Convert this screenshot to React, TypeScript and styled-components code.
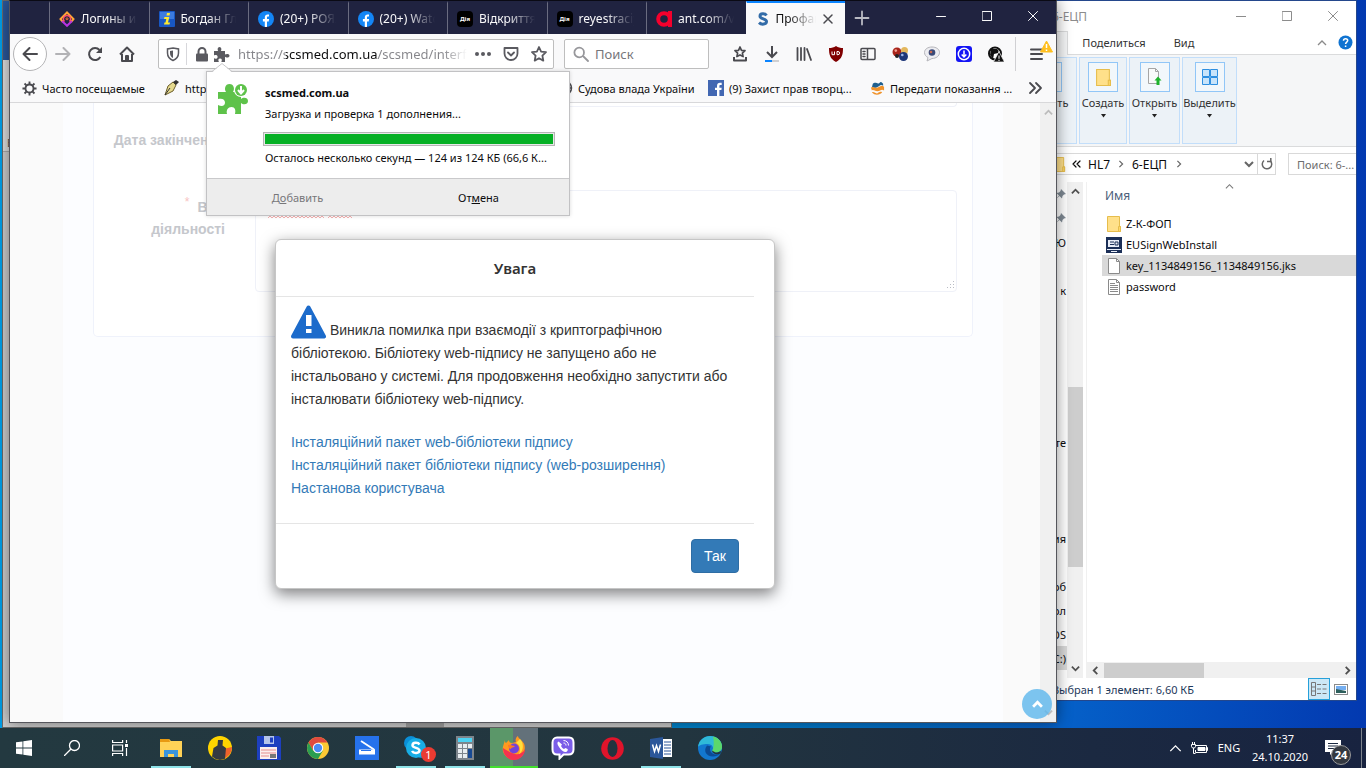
import React from 'react';
import styled, { createGlobalStyle, css } from 'styled-components';

const ui = `'Noto Sans', 'Open Sans', sans-serif`;
const web = `'Liberation Sans', Arial, sans-serif`;

const Global = createGlobalStyle`
  * { box-sizing: border-box; }
  body { margin: 0; overflow: hidden; font-family: ${ui}; font-size: 11px; color: #0c0c0d; }
  button { font: inherit; color: inherit; background: none; border: 0; padding: 0; }
  input, textarea { font: inherit; border: 0; padding: 0; outline: 0; background: none; }
  svg { display: block; flex: none; }
`;

/* ---------- desktop ---------- */
const Desktop = styled.div`
  display: flex;
  flex-direction: column;
  height: 100vh;
  background: linear-gradient(90deg, #009fe9 0, #0083cc 50%, #0560c8 78%, #0339b0 100%);
`;
const Workspace = styled.main`
  position: relative;
  flex: 1;
  min-height: 0;
  overflow: hidden;
`;

/* ---------- word window in the back ---------- */
const WordWindow = styled.section`
  position: absolute;
  left: 2px;
  top: 0;
  bottom: 0;
  width: 670px;
  display: flex;
  flex-direction: column;
  background: #cdcdcd;
  border: 1px solid #6b6b6b;
`;
const WordTitle = styled.div`
  height: 59px;
  background: #2b579a;
`;
const WordRibbon = styled.div`
  height: 92px;
  padding: 76px 0 0 4px;
  line-height: 14px;
  color: #555;
  background: #dedede;
  border-bottom: 1px solid #aaa;
`;
const WordScroll = styled.div`
  height: 5px;
  margin-top: auto;
  padding-left: 403px;
`;
const WordThumb = styled.div`
  width: 38px;
  height: 5px;
  background: #a0a0a0;
`;

/* ---------- browser window ---------- */
const Browser = styled.section`
  position: absolute;
  left: 9px;
  top: 0;
  right: 309px;
  bottom: 5px;
  display: flex;
  flex-direction: column;
  border: 1px solid #55565c;
  border-top-color: #0a0a14;
  background: #f9f9fa;
  box-shadow: 0 0 14px rgba(0, 0, 0, 0.45);
`;
const TabBar = styled.div`
  display: flex;
  height: 33px;
  flex: none;
  background: #202340;
  color: #f9f9fa;
`;
const TabStub = styled.div`
  width: 39px;
  flex: none;
`;
const Tabs = styled.div`
  display: grid;
  grid-template-columns: repeat(8, minmax(0, 1fr));
  flex: 0 1 796px;
  min-width: 0;
`;
const Tab = styled.button<{ $active?: boolean }>`
  display: flex;
  align-items: center;
  min-width: 0;
  gap: 6px;
  padding: 0 12px 0 9px;
  text-align: left;
  border-left: 1px solid #6a6c80;
  border-top: 2px solid transparent;
  ${(p) =>
    p.$active &&
    css`
      padding-right: 11px;
      color: #0c0c0d;
      background: #f9f9fa;
      border-left-color: #f9f9fa;
      border-top-color: #0a84ff;
    `}
`;
const TabLabel = styled.span`
  flex: 1;
  overflow: hidden;
  white-space: nowrap;
  font-size: 12px;
  line-height: 18px;
  mask-image: linear-gradient(90deg, #000 calc(100% - 28px), transparent);
`;
const DiaIcon = styled.span`
  display: flex;
  align-items: center;
  justify-content: center;
  flex: none;
  width: 16px;
  height: 16px;
  border-radius: 4px;
  background: #000;
  color: #fff;
  font: 700 6px ${ui};
`;
const NewTab = styled.button`
  width: 34px;
  display: grid;
  place-items: center;
`;
const WindowControls = styled.div`
  display: flex;
  margin-left: auto;
`;
const WindowButton = styled.button`
  width: 46px;
  height: 30px;
  display: grid;
  place-items: center;
`;
const NavBar = styled.div`
  display: flex;
  align-items: center;
  flex: none;
  height: 40px;
  padding: 0 3px;
  color: #4a4a4f;
`;
const ToolButton = styled.button<{ $faded?: boolean }>`
  position: relative;
  flex: none;
  width: 32px;
  height: 32px;
  display: grid;
  place-items: center;
  opacity: ${(p) => (p.$faded ? 0.4 : 1)};
`;
const BackButton = styled(ToolButton)`
  width: 34px;
  height: 34px;
  border: 1px solid #b4b4b6;
  border-radius: 50%;
  background: #fff;
`;
const UrlBar = styled.div`
  display: flex;
  align-items: center;
  flex: 1;
  min-width: 0;
  height: 30px;
  margin: 0 10px 0 15px;
  padding: 0 0 0 6px;
  background: #fff;
  border: 1px solid #bebebe;
  border-radius: 2px;
`;
const BarButton = styled.button<{ $w: number }>`
  width: ${(p) => p.$w}px;
  height: 28px;
  flex: none;
  display: grid;
  place-items: center;
`;
const BarDivider = styled.span`
  width: 1px;
  height: 22px;
  background: #d7d7db;
  margin: 0 5px;
`;
const UrlInput = styled.input`
  flex: 1;
  min-width: 0;
  margin-left: 6px;
  height: 24px;
  font-size: 13px;
  color: #737378;
  background: linear-gradient(90deg, #85858a 48px, #0c0c0d 48px, #0c0c0d 140px, #85858a 140px, #85858a calc(100% - 26px), transparent calc(100% - 2px));
  background-clip: text;
  -webkit-background-clip: text;
  -webkit-text-fill-color: transparent;
`;
const SearchBox = styled.label`
  display: flex;
  align-items: center;
  gap: 6px;
  width: 145px;
  height: 30px;
  flex: none;
  margin-right: 15px;
  padding: 0 8px;
  background: #fff;
  border: 1px solid #bebebe;
  border-radius: 2px;
  input { width: 100%; min-width: 0; font-size: 13px; }
  input::placeholder { color: #76767a; opacity: 1; }
`;
const NavDivider = styled.span`
  width: 1px;
  height: 34px;
  margin: 0 5px 0 3px;
  background: #d0d0d3;
`;
const AlertBadge = styled.span`
  position: absolute;
  right: 0;
  top: 2px;
`;
const Bookmarks = styled.div`
  display: flex;
  align-items: center;
  flex: none;
  height: 29px;
  padding: 0 12px;
  border-bottom: 1px solid #d8d8da;
`;
const Bookmark = styled.a<{ $w?: number }>`
  display: flex;
  align-items: center;
  gap: 5px;
  width: ${(p) => (p.$w ? `${p.$w}px` : 'auto')};
  flex: ${(p) => (p.$w ? 'none' : '1')};
  min-width: 0;
  color: inherit;
  text-decoration: none;
  white-space: nowrap;
`;
const More = styled.button`
  margin-left: auto;
`;

/* ---------- install popup ---------- */
const Popup = styled.aside`
  position: absolute;
  z-index: 3;
  left: 196px;
  top: 70px;
  width: 364px;
  background: #fff;
  border: 1px solid #c2c2c4;
  box-shadow: 0 0 4px rgba(0, 0, 0, 0.15);
`;
const PopupArrow = styled.span`
  position: absolute;
  left: 5px;
  top: -9px;
`;
const PopupBody = styled.div`
  display: grid;
  grid-template-columns: 30px 1fr;
  column-gap: 15px;
  height: 106px;
  padding: 10px 14px 0 11px;
  line-height: 21px;
  div { min-width: 0; }
`;
const PopupLine = styled.p`
  margin: 0 0 0 2px;
  overflow: hidden;
  white-space: nowrap;
  text-overflow: ellipsis;
`;
const PopupProgress = styled.progress`
  display: block;
  appearance: none;
  width: 100%;
  height: 14px;
  margin: 8px 0 1px;
  padding: 1px;
  border: 1px solid #b5b5b5;
  background: #e8e8e8;
  &::-webkit-progress-bar { background: #e8e8e8; }
  &::-webkit-progress-value { background: #06b025; }
`;
const PopupFooter = styled.div`
  display: grid;
  grid-template-columns: 1fr 1fr;
  height: 37px;
  background: #ededed;
  border-top: 1px solid #c9c9cb;
  button:disabled { color: #77777a; }
`;

/* ---------- web page ---------- */
const Viewport = styled.div`
  display: flex;
  flex: 1;
  min-height: 0;
`;
const Page = styled.div`
  position: relative;
  flex: 1;
  min-width: 0;
  padding: 0 37px 0 53px;
  overflow: hidden;
  background: #fafafa;
  font-family: ${web};
  font-size: 14px;
`;
const PageSheet = styled.div`
  height: 100%;
  padding: 0 30px;
  background: #fcfdff;
`;
const FormCard = styled.form`
  display: grid;
  grid-template-columns: 131px 1fr;
  grid-template-rows: 87px auto;
  column-gap: 30px;
  align-content: start;
  align-items: start;
  height: 234px;
  padding-right: 15px;
  background: #fff;
  border: 1px solid #eff2fb;
  border-top: 0;
  border-radius: 0 0 5px 5px;
`;
const FormLabel = styled.label<{ $top: number }>`
  padding-top: ${(p) => p.$top}px;
  font-weight: 700;
  line-height: 22px;
  text-align: right;
  white-space: nowrap;
  color: #c5c7cc;
  sup { font-size: 12px; line-height: 12px; margin-right: 8px; color: #f7c3c3; font-weight: 400; }
`;
const DateInput = styled.input`
  height: 4px;
  border: 1px solid #eff1f8;
  border-top: 0;
  border-radius: 0 0 4px 4px;
`;
const ActivityText = styled.textarea`
  height: 102px;
  padding: 8px 12px;
  color: #fff;
  border: 1px solid #eff1f8;
  border-radius: 4px;
  resize: none;
`;
const TextCell = styled.div`
  position: relative;
  display: grid;
  align-content: start;
`;
const Squiggle = styled.svg`
  position: absolute;
  left: 13px;
  top: 25px;
`;
const Grip = styled.svg`
  position: absolute;
  right: 3px;
  bottom: 3px;
`;
const Modal = styled.div`
  position: absolute;
  left: 50%;
  top: 136px;
  width: 500px;
  margin-left: -250px;
  padding-right: 20px;
  background: #fff;
  border: 1px solid #c6c6c6;
  border-radius: 6px;
  box-shadow: 0 5px 15px rgba(0, 0, 0, 0.5);
  color: #333;
`;
const ModalTitle = styled.h4`
  margin: 0;
  height: 57px;
  text-align: center;
  font: 600 15px/56px ${ui};
  border-bottom: 1px solid #e5e5e5;
`;
const ModalBody = styled.div`
  height: 226px;
  padding: 8px 15px 0;
  line-height: 23px;
  p { margin: 0 0 20px; }
  p svg { display: inline-block; vertical-align: -4px; }
  a { display: block; color: #337ab7; text-decoration: none; }
`;
const ModalFooter = styled.div`
  display: flex;
  justify-content: flex-end;
  padding: 15px;
  border-top: 1px solid #e5e5e5;
`;
const OkButton = styled.button`
  width: 48px;
  height: 34px;
  color: #fff;
  background: #337ab7;
  border: 1px solid #2e6da4;
  border-radius: 4px;
`;
const PageScroll = styled.div`
  width: 16px;
  display: flex;
  flex-direction: column;
  justify-content: space-between;
  align-items: center;
  padding: 5px 0;
  background: #f0f0f0;
`;
const ToTop = styled.button`
  position: absolute;
  z-index: 2;
  right: 4px;
  bottom: 3px;
  width: 30px;
  height: 30px;
  display: grid;
  place-items: center;
  border-radius: 50%;
  background: rgba(92, 183, 236, 0.8);
`;

/* ---------- file manager window ---------- */
const Explorer = styled.section`
  position: absolute;
  top: 0;
  right: 9px;
  bottom: 27px;
  width: 358px;
  display: flex;
  flex-direction: column;
  background: #fff;
  border: 1px solid #24478c;
`;
const ExTitle = styled.div`
  display: flex;
  align-items: center;
  height: 30px;
  flex: none;
  color: #8c8c8c;
  font-size: 12px;
`;
const ExTitleText = styled.span`
  width: 87px;
  text-align: right;
`;
const ExMenu = styled.div`
  display: flex;
  align-items: stretch;
  height: 24px;
  flex: none;
  padding-right: 3px;
  line-height: 24px;
  border-bottom: 1px solid #dadbdc;
  color: #333;
  svg { align-self: center; }
`;
const ExMenuTab = styled.button<{ $w: number; $open?: boolean }>`
  width: ${(p) => p.$w}px;
  flex: none;
  ${(p) =>
    p.$open &&
    css`
      height: 24px;
      background: #f5f6f7;
      border: 1px solid #dadbdc;
      border-bottom: 0;
    `}
`;
const HelpRow = styled.div`
  display: flex;
  align-items: center;
  gap: 11px;
  margin-left: auto;
`;
const Ribbon = styled.div`
  display: flex;
  align-items: flex-start;
  gap: 2px;
  height: 92px;
  flex: none;
  padding: 2px 0 0 17px;
  background: #f5f6f7;
  border-bottom: 1px solid #dadbdc;
`;
const RibbonButton = styled.button<{ $w: number }>`
  display: flex;
  flex-direction: column;
  align-items: center;
  flex: none;
  width: ${(p) => p.$w}px;
  height: 87px;
  padding-top: 4px;
  overflow: hidden;
  white-space: nowrap;
  color: #333;
  background: #ecf2f7;
  border: 1px solid #c2defa;
  line-height: 22px;
`;
const RibbonIcon = styled.span`
  display: grid;
  place-items: center;
  flex: none;
  width: 30px;
  height: 30px;
  border: 1px solid #91c6f7;
  background: #f2f7fb;
`;
const AddressRow = styled.div`
  display: flex;
  gap: 12px;
  flex: none;
  height: 35px;
  padding: 6px 0 7px;
`;
const AddressBox = styled.div`
  display: flex;
  align-items: center;
  width: 276px;
  flex: none;
  padding-left: 50px;
  border: 1px solid #d9d9d9;
  font-size: 12px;
  white-space: nowrap;
`;
const Crumb = styled.span<{ $w: number }>`
  width: ${(p) => p.$w}px;
`;
const AddressTail = styled.div`
  display: flex;
  align-items: center;
  align-self: stretch;
  gap: 3px;
  margin-left: auto;
`;
const Refresh = styled.button`
  display: grid;
  place-items: center;
  width: 18px;
  align-self: stretch;
  border-left: 1px solid #d9d9d9;
`;
const ExSearch = styled.input`
  flex: 1;
  min-width: 0;
  padding-left: 8px;
  border: 1px solid #d9d9d9;
  border-right: 0;
  &::placeholder { color: #6d6d6d; opacity: 1; }
`;
const ExMain = styled.div`
  display: flex;
  flex: 1;
  min-height: 0;
`;
const SideTree = styled.div`
  display: flex;
  flex-direction: column;
  justify-content: space-between;
  width: 67px;
  flex: none;
  padding-bottom: 8px;
`;
const TreeItem = styled.div<{ $sel?: boolean }>`
  display: flex;
  align-items: center;
  justify-content: flex-end;
  height: 24px;
  padding-right: 1px;
  overflow: hidden;
  white-space: nowrap;
  background: ${(p) => (p.$sel ? '#d9d9d9' : 'transparent')};
`;
const VScroll = styled.div`
  display: flex;
  flex-direction: column;
  align-items: center;
  justify-content: space-between;
  width: 16px;
  flex: none;
  padding: 5px 0;
  background: #f0f0f0;
`;
const VThumb = styled.div`
  width: 15px;
  height: 180px;
  margin-top: 94px;
  background: #cdcdcd;
`;
const FilePane = styled.div`
  display: flex;
  flex-direction: column;
  flex: 1;
  min-width: 0;
  margin-left: 3px;
  border-left: 1px solid #f0f0f0;
`;
const FileTable = styled.table`
  width: 100%;
  border-collapse: collapse;
  th { position: relative; height: 31px; padding: 0 0 5px 18px; font-size: 12px; font-weight: 400; text-align: left; color: #4c607a; }
  td { height: 21px; padding: 0; }
`;
const SortMark = styled.span`
  position: absolute;
  left: 138px;
  top: 0;
`;
const FileCell = styled.div<{ $sel?: boolean }>`
  display: flex;
  align-items: center;
  gap: 4px;
  height: 21px;
  margin-left: 15px;
  padding-left: 4px;
  white-space: nowrap;
  background: ${(p) => (p.$sel ? '#d9d9d9' : 'transparent')};
`;
const HScroll = styled.div`
  display: flex;
  align-items: center;
  height: 16px;
  margin-top: auto;
  padding: 0 4px;
  background: #f0f0f0;
  svg:last-child { margin-left: auto; }
`;
const HThumb = styled.div`
  width: 100px;
  height: 15px;
  margin-left: 4px;
  background: #cdcdcd;
`;
const ExStatus = styled.div`
  display: flex;
  align-items: center;
  flex: none;
  height: 22px;
  padding-right: 4px;
  color: #1e395b;
`;
const StatusText = styled.span`
  width: 194px;
  text-align: right;
  white-space: nowrap;
`;
const ViewButton = styled.button<{ $on?: boolean }>`
  display: grid;
  place-items: center;
  width: 22px;
  height: 22px;
  border: 1px solid ${(p) => (p.$on ? '#26a0da' : 'transparent')};
  background: ${(p) => (p.$on ? '#cce8f6' : 'transparent')};
`;
const ViewSwitch = styled.div`
  display: flex;
  margin-left: auto;
`;

/* ---------- taskbar ---------- */
const Taskbar = styled.footer`
  display: flex;
  height: 40px;
  flex: none;
  color: #fff;
  background: linear-gradient(90deg, #233940 0, #22353f 50%, #1b2941 80%, #182340 100%);
`;
const SystemButton = styled.button`
  width: 48px;
  display: grid;
  place-items: center;
`;
const Apps = styled.div`
  display: flex;
  gap: 1px;
  margin-left: 3px;
`;
const AppButton = styled.button<{ $state?: 'open' | 'active' }>`
  position: relative;
  width: 48px;
  display: grid;
  place-items: center;
  ${(p) =>
    p.$state === 'open' &&
    css`
      background: linear-gradient(#8ee3e8, #8ee3e8) center bottom / 40px 2px no-repeat;
    `}
  ${(p) =>
    p.$state === 'active' &&
    css`
      background: linear-gradient(90deg, #5b9769 23px, #63717a 23px);
      box-shadow: inset 0 -2px #43e02f;
    `}
`;
const CountBadge = styled.span`
  position: absolute;
  right: 4px;
  bottom: 6px;
  width: 15px;
  height: 15px;
  border-radius: 50%;
  background: #ea3b32;
  line-height: 15px;
  text-align: center;
`;
const Tray = styled.div`
  display: flex;
  align-items: center;
  margin-left: auto;
`;
const TrayItem = styled.button<{ $w: number }>`
  position: relative;
  display: grid;
  place-items: center;
  width: ${(p) => p.$w}px;
  height: 40px;
  line-height: 18px;
`;
const NoteButton = styled(TrayItem)`
  padding-right: 8px;
`;
const NoteBadge = styled.span`
  position: absolute;
  left: 18px;
  top: 17px;
  width: 20px;
  height: 20px;
  border: 1px solid #999;
  border-radius: 50%;
  background: #333840;
  font-weight: 700;
  line-height: 17px;
`;
const PeekBar = styled.span`
  width: 5px;
  height: 40px;
  border-left: 1px solid #7d838c;
`;

/* ---------- drawings ---------- */
const Stroke = ({ d, s = 16, w = 2, c = 'currentColor', vb = 16 }: { d: string; s?: number; w?: number; c?: string; vb?: number }) => (
  <svg width={s} height={s} viewBox={`0 0 ${vb} ${vb}`} fill="none" stroke={c} strokeWidth={w} strokeLinecap="round" strokeLinejoin="round">
    <path d={d} />
  </svg>
);
const Chevron = ({ dir, c = '#505050', s = 10, w = 2 }: { dir: 'up' | 'down' | 'left' | 'right'; c?: string; s?: number; w?: number }) => {
  const d = { up: 'M1 7l4-4 4 4', down: 'M1 3l4 4 4-4', left: 'M7 1L3 5l4 4', right: 'M3 1l4 4-4 4' }[dir];
  return (
    <svg width={s} height={s} viewBox="0 0 10 10" fill="none" stroke={c} strokeWidth={w}>
      <path d={d} />
    </svg>
  );
};
const Facebook = () => (
  <svg width="16" height="16" viewBox="0 0 16 16">
    <circle cx="8" cy="8" r="8" fill="#1486f5" />
    <path d="M6.8 16v-5.6H4.9V8.1h1.9V6.5c0-2 1.1-3 2.900-3 .7 0 1.300.1 1.300.1v1.900h-.9c-.9 0-1.100.5-1.100 1.100v1.500h2.100l-.4 2.300H9V16z" fill="#fff" />
  </svg>
);
const Puzzle = ({ s = 16, c = 'currentColor' }: { s?: number; c?: string }) => (
  <svg width={s} height={s} viewBox="0 0 16 16" fill={c}>
    <path d="M0 5h4.200C3.300 3.900 3.500 1 5.500 1s2.300 2.900 1.400 4H11v3.600c1-.9 4.500-1.200 4.500 1.100s-3.500 2-4.500 1V16H7.300c.9-1.600.7-3.400-1.200-3.400S4 14.400 4.900 16H0v-3.800c1.600.9 3.600.5 3.600-1.300S1.600 8.700 0 9.500z" />
  </svg>
);
const Folder = ({ s = 16 }: { s?: number }) => (
  <svg width={s} height={s} viewBox="0 0 16 16">
    <path d="M1.500.5h12v10h1v5h-13z" fill="#ffe08a" stroke="#e6bd4c" />
    <path d="M12.500 15.500v-5h2v5z" fill="#ffd869" stroke="#e6bd4c" />
  </svg>
);
const Sheet = ({ lines }: { lines?: boolean }) => (
  <svg width="16" height="16" viewBox="0 0 16 16" fill="#fff" stroke="#8a8a8a">
    <path d="M2.500.5h8l3 3v12h-11z" />
    <path d="M10.500.5v3h3" fill="none" />
    {lines && <path d="M4 4.500h5M4 6.500h8M4 8.500h8M4 10.500h8M4 12.500h8" />}
  </svg>
);
const Pin = () => (
  <svg width="10" height="10" viewBox="0 0 10 10" fill="#7f8a94">
    <path d="M5 0l5 5-2 .5L6.500 7 6 9.500 3.500 7 0 10l3-3.500L.5 4 3 3.500 4.500 2z" />
  </svg>
);
const DropMark = () => (
  <svg width="7" height="4" viewBox="0 0 7 4"><path d="M1 0h5L3.500 3.500z" fill="#222" /></svg>
);

const BrowserTabs = () => (
  <TabBar>
    <TabStub />
    <Tabs>
      <Tab>
        <svg width="16" height="16" viewBox="0 0 16 16" fill="none" strokeWidth="2">
          <path d="M4 11L1.500 8 8 1.500 14.500 8 12 11" stroke="#ffa436" />
          <path d="M3 10l5 4.800L13 10" stroke="#b833e1" />
          <path d="M5.500 10.500a3.500 3.500 0 1 1 5 0" stroke="#ff4f6d" strokeWidth="1.500" />
          <circle cx="8" cy="7.800" r="1" stroke="#ff7139" strokeWidth="1" />
        </svg>
        <TabLabel>Логины и пароли</TabLabel>
      </Tab>
      <Tab>
        <svg width="16" height="16" viewBox="0 0 16 16">
          <rect width="16" height="16" rx="1" fill="#1857c4" />
          <rect x="1" y="1" width="14" height="7" fill="#3c7be0" />
          <path d="M8 2h3l-.5 2.500h-3zM5.500 6h4.800L9 11.500h2l-.5 2H5l.5-2h1l.8-3.500H5z" fill="#ffe92e" />
        </svg>
        <TabLabel>Богдан Глоба</TabLabel>
      </Tab>
      <Tab><Facebook /><TabLabel>(20+) РОЯЛЬ</TabLabel></Tab>
      <Tab><Facebook /><TabLabel>(20+) Watch</TabLabel></Tab>
      <Tab><DiaIcon>Дія</DiaIcon><TabLabel>Відкриття ФОП</TabLabel></Tab>
      <Tab><DiaIcon>Дія</DiaIcon><TabLabel>reyestraciya</TabLabel></Tab>
      <Tab>
        <svg width="16" height="16" viewBox="0 0 16 16" fill="none" stroke="#f5002d" strokeWidth="4">
          <path d="M14 0v16" />
          <circle cx="8" cy="8" r="5.800" />
        </svg>
        <TabLabel>ant.com/video</TabLabel>
      </Tab>
      <Tab $active>
        <svg width="14" height="16" viewBox="0 0 14 16" fill="none" stroke="#336ca8" strokeWidth="3">
          <path d="M10.500 4.500C9 2.200 4 2.200 4 5.200s6.500 2.300 6.500 5.300-5 3.500-7.500 1.200" />
        </svg>
        <TabLabel>Профайл</TabLabel>
        <Stroke d="M2 2l8 8M10 2l-8 8" s={12} vb={12} w={1.5} c="#4a4a4f" />
      </Tab>
    </Tabs>
    <NewTab aria-label="Новая вкладка"><Stroke d="M8 1.500v13M1.500 8h13" w={1.800} c="#b9bac3" /></NewTab>
    <WindowControls>
      <WindowButton aria-label="Свернуть"><Stroke d="M0.500 5.500h9" s={10} vb={10} w={1} /></WindowButton>
      <WindowButton aria-label="Развернуть"><Stroke d="M.5.5h9v9h-9z" s={10} vb={10} w={1} /></WindowButton>
      <WindowButton aria-label="Закрыть"><Stroke d="M.5.5l9 9M9.500.5l-9 9" s={10} vb={10} w={1} /></WindowButton>
    </WindowControls>
  </TabBar>
);

const Navigation = () => (
  <NavBar>
    <BackButton aria-label="Назад"><Stroke d="M15 8H1.500M7.500 2l-6 6 6 6" /></BackButton>
    <ToolButton $faded aria-label="Вперёд"><Stroke d="M1 8h13.500M8.500 2l6 6-6 6" /></ToolButton>
    <ToolButton aria-label="Обновить">
      <svg width="16" height="16" viewBox="0 0 16 16" fill="none" stroke="currentColor" strokeWidth="2">
        <path d="M13.300 11A6 6 0 1 1 12.500 4" />
        <path d="M15 1v6H9z" fill="currentColor" stroke="none" />
      </svg>
    </ToolButton>
    <ToolButton aria-label="Домой">
      <svg width="16" height="16" viewBox="0 0 16 16" fill="none" stroke="currentColor" strokeWidth="2" strokeLinejoin="round">
        <path d="M1 8.500L8 1.500l7 7M3 8v7h10V8" />
        <path d="M7 14v-4h2v4" />
      </svg>
    </ToolButton>
    <UrlBar>
      <BarButton $w={16} aria-label="Защита">
        <svg width="16" height="16" viewBox="0 0 16 16" fill="none" stroke="#5a5a60" strokeWidth="1.500">
          <path d="M8 2l5.500 1v4c0 3.500-2 6-5.500 7.500C4.500 13 2.500 10.500 2.500 7V3z" />
          <path d="M8 4.500v7.500C6 11 5 9.500 5 7V5z" fill="#5a5a60" stroke="none" />
        </svg>
      </BarButton>
      <BarDivider />
      <BarButton $w={20} aria-label="Соединение">
        <svg width="14" height="15" viewBox="0 0 14 15">
          <path d="M3.500 7V4.500a3.500 3.500 0 0 1 7 0V7" fill="none" stroke="#5a5a60" strokeWidth="2" />
          <rect x="1" y="6.500" width="12" height="8" rx="1" fill="#5a5a60" />
        </svg>
      </BarButton>
      <BarButton $w={20} aria-label="Дополнение"><Puzzle c="#5a5a60" /></BarButton>
      <UrlInput aria-label="Адрес" defaultValue="https://scsmed.com.ua/scsmed/interface" />
      <BarButton $w={28} aria-label="Действия">
        <svg width="16" height="4" viewBox="0 0 16 4" fill="#5a5a60"><circle cx="2" cy="2" r="2" /><circle cx="8" cy="2" r="2" /><circle cx="14" cy="2" r="2" /></svg>
      </BarButton>
      <BarButton $w={28} aria-label="Pocket"><Stroke d="M1.500 2h13v5.500a6.500 6.500 0 0 1-13 0zM5 6.500l3 3 3-3" c="#5a5a60" w={1.800} /></BarButton>
      <BarButton $w={28} aria-label="Закладка"><Stroke d="M8 1l2.100 4.600 4.900.6-3.600 3.400.9 5L8 12.200l-4.300 2.400.9-5L1 6.200l4.900-.6z" c="#5a5a60" w={1.800} /></BarButton>
    </UrlBar>
    <SearchBox>
      <Stroke d="M11 6.500a4.800 4.800 0 1 1-9.600 0 4.800 4.800 0 0 1 9.600 0M10 10l5 5" c="#97979b" w={1.800} />
      <input placeholder="Поиск" aria-label="Поиск" />
    </SearchBox>
    <ToolButton aria-label="В закладки">
      <svg width="16" height="16" viewBox="0 0 16 16" fill="none" stroke="currentColor" strokeWidth="1.700" strokeLinejoin="round">
        <path d="M8 1l1.500 3.300 3.500.4-2.600 2.400.7 3.500L8 8.900l-3.100 1.700.7-3.500L3 4.700l3.500-.4z" />
        <path d="M2 11v3.500h12V11" strokeWidth="2" />
      </svg>
    </ToolButton>
    <ToolButton aria-label="Загрузки">
      <svg width="16" height="16" viewBox="0 0 16 16" fill="none" stroke="currentColor" strokeWidth="2">
        <path d="M8 0v10M3 6l5 5 5-5" />
        <path d="M1 15h14" stroke="#d0d0d2" /><path d="M1 15h7" stroke="#0a84ff" />
      </svg>
    </ToolButton>
    <ToolButton aria-label="Библиотека"><Stroke d="M1.500 2v12M5 2v12M8.500 2v12M11 3l4 11" w={1.8} /></ToolButton>
    <ToolButton aria-label="uBlock">
      <svg width="16" height="16" viewBox="0 0 16 16">
        <path d="M8 0c2 1.500 4.500 2 7 2 0 7-1 10.500-7 14C2 12.500 1 9 1 2c2.500 0 5-.5 7-2z" fill="#800000" />
        <path d="M4 5.500v3.200h2.500V5.500M9 5.500h1a1.600 1.600 0 0 1 0 3.200H9z" fill="none" stroke="#fff" />
      </svg>
    </ToolButton>
    <ToolButton aria-label="Боковая панель"><Stroke d="M2 2.500h12a1 1 0 0 1 1 1v9a1 1 0 0 1-1 1H2a1 1 0 0 1-1-1v-9a1 1 0 0 1 1-1zM7.500 2.500v11M3 5.500h2M3 8h2M3 10.500h2" w={1.5} /></ToolButton>
    <ToolButton aria-label="Расширение">
      <svg width="17" height="16" viewBox="0 0 17 16"><circle cx="5" cy="6" r="4.500" fill="#a8241a" /><circle cx="12.500" cy="4.500" r="3.500" fill="#e3b75c" /><circle cx="11.500" cy="10.500" r="4.500" fill="#1d3678" /><circle cx="5" cy="10" r="2" fill="#222" /><circle cx="3.800" cy="4.600" r="1.300" fill="#f2a091" /><circle cx="10.300" cy="9" r="1.300" fill="#9db4e8" /></svg>
    </ToolButton>
    <ToolButton aria-label="Расширение">
      <svg width="16" height="16" viewBox="0 0 16 16"><path d="M8 1c4 0 7.500 2 7.500 5.500S12 12.500 8 12.500L3 15l1-3.500C2 10.500.5 9 .5 6.500.5 3 4 1 8 1z" fill="#ededf1" stroke="#b5b5ba" /><circle cx="8" cy="6.500" r="3.300" fill="#3a4a78" /><circle cx="7" cy="6" r="1.300" fill="#c86a50" /></svg>
    </ToolButton>
    <ToolButton aria-label="Расширение">
      <svg width="16" height="16" viewBox="0 0 16 16"><rect width="16" height="16" rx="3" fill="#1414f5" /><g fill="none" stroke="#fff" strokeWidth="1.500"><circle cx="8" cy="8" r="5.700" /><path d="M8 4.500v6M5.700 8.500L8 11l2.300-2.500" /></g></svg>
    </ToolButton>
    <ToolButton aria-label="Расширение">
      <svg width="16" height="16" viewBox="0 0 16 16"><circle cx="7" cy="7.500" r="6" fill="#fff" stroke="#111" strokeWidth="2" /><path d="M3 3h6c2 1 2 3 1 4L6 8l-1 5-3-4z" fill="#111" /><path d="M11 5.500L16.500 16H5.500z" fill="#111" stroke="#fff" strokeWidth=".7" /><path d="M11 9.500v3.300M11 13.800v1.200" stroke="#fff" /></svg>
    </ToolButton>
    <NavDivider />
    <ToolButton aria-label="Меню">
      <Stroke d="M2 3.500h11M2 8h11M2 13h11" />
      <AlertBadge>
        <svg width="13" height="13" viewBox="0 0 13 13"><path d="M6.500 1L12.500 12H.5z" fill="#ffbf1f" stroke="#ffbf1f" strokeLinejoin="round" /><path d="M6.500 4v4M6.500 9.500V11" stroke="#fff" strokeWidth="1.500" /></svg>
      </AlertBadge>
    </ToolButton>
  </NavBar>
);

const BookmarkBar = () => (
  <Bookmarks>
    <Bookmark href="#" $w={142}>
      <svg width="15" height="15" viewBox="0 0 16 16" fill="none" stroke="#4a4a4f">
        <circle cx="8" cy="8" r="4.300" strokeWidth="2" />
        <path d="M8 .5v3M8 12.500v3M.5 8h3M12.500 8h3M2.700 2.700l2 2M11.300 11.300l2 2M13.300 2.700l-2 2M4.700 11.300l-2 2" strokeWidth="2" />
      </svg>
      Часто посещаемые
    </Bookmark>
    <Bookmark href="#">
      <svg width="16" height="16" viewBox="0 0 16 16"><path d="M1 15l3-9 5-4 3 3-3 6-8 4z" fill="#e5d98e" stroke="#6d5f2a" /><path d="M9 2l3-2 3 2-3 3z" fill="#333" /><path d="M1 15l5-7" stroke="#333" /></svg>
      http://
    </Bookmark>
    <Bookmark href="#" $w={151}>
      <svg width="16" height="16" viewBox="0 0 16 16" fill="none" stroke="#4a4a4f" strokeWidth="1.500"><circle cx="8" cy="8" r="6.500" /><path d="M1.500 8h13M8 1.500c-4 4-4 9 0 13 4-4 4-9 0-13z" /></svg>
      Судова влада України
    </Bookmark>
    <Bookmark href="#" $w={162}>
      <svg width="16" height="16" viewBox="0 0 16 16"><rect width="16" height="16" fill="#4267b2" /><path d="M9 16v-6H7V7.700h2V6c0-2 1.200-3.200 3-3.200h1.700V5h-1.200c-.9 0-1.100.4-1.100 1.100v1.600h2.300L13.400 10h-2v6z" fill="#fff" /></svg>
      (9) Захист прав творц...
    </Bookmark>
    <Bookmark href="#" $w={158}>
      <svg width="15" height="15" viewBox="0 0 16 16"><path d="M3 3c3-3 5 1 7-1s3 0 4 1v2c-3-2-4 1-7 2S3 6 2 7z" fill="#1f5f8e" /><path d="M1 7c3-2 4 1 7 0s4-3 7-1v4c-3-2-4 1-7 1s-4-2-6-1z" fill="#f0922a" /><path d="M2 12c3-1 4 2 6 1s3-2 5-1c-2 3-8 4-11 0z" fill="#f0922a" /></svg>
      Передати показання ...
    </Bookmark>
    <More aria-label="Ещё">
      <Stroke d="M2 3l5 5-5 5M8 3l5 5-5 5" w={1.8} c="#4a4a4f" />
    </More>
  </Bookmarks>
);

const InstallPopup = () => (
  <Popup>
    <PopupArrow>
      <svg width="20" height="10" viewBox="0 0 20 10"><path d="M0 9.500L10 .5l10 9V10H0z" fill="#fff" /><path d="M0 8.500L10 .5l10 8" fill="none" stroke="#c9c9cb" /></svg>
    </PopupArrow>
    <PopupBody>
      <svg width="31" height="32" viewBox="0 0 31 32">
        <path d="M0 10h8c-2-3-1-8 3.500-8S17 7 15 10h8v7c2-2 7-2 7 2s-5 4-7 2v11h-6c1-4 0-7-3.500-7S8 28 9 32H0v-9c4 2 7 1 7-2.500S4 16 0 17z" fill="#5ec24a" />
        <circle cx="23" cy="8" r="7" fill="#fff" /><circle cx="23" cy="8" r="6" fill="#5ec24a" />
        <path d="M23 4v6M20 8l3 3.500L26 8" fill="none" stroke="#fff" strokeWidth="2" />
      </svg>
      <div>
        <PopupLine><b>scsmed.com.ua</b></PopupLine>
        <PopupLine>Загрузка и проверка 1 дополнения...</PopupLine>
        <PopupProgress value={100} max={100} aria-label="Загрузка" />
        <PopupLine>Осталось несколько секунд — 124 из 124 КБ (66,6 К...</PopupLine>
      </div>
    </PopupBody>
    <PopupFooter>
      <button disabled>Д<u>о</u>бавить</button>
      <button>От<u>м</u>ена</button>
    </PopupFooter>
  </Popup>
);

const WebPage = () => (
  <Viewport>
    <Page>
      <PageSheet>
        <FormCard>
          <FormLabel htmlFor="date" $top={26}>Дата закінчення</FormLabel>
          <DateInput id="date" />
          <FormLabel htmlFor="kind" $top={6}><sup>*</sup>Вид<br />діяльності</FormLabel>
          <TextCell>
            <ActivityText id="kind" />
            <Squiggle width="88" height="4" fill="none" stroke="#f7b0b0"><path d={'M0 3' + 'l2-2l2 2'.repeat(14) + 'm4 0' + 'l2-2l2 2'.repeat(6)} /></Squiggle>
            <Grip width="9" height="9" stroke="#b9bcc4" strokeDasharray="1 2"><path d="M8 1.500h1M5 4.500h4M2 7.500h7" /></Grip>
          </TextCell>
        </FormCard>
      </PageSheet>
      <Modal role="dialog" aria-label="Увага">
        <ModalTitle>Увага</ModalTitle>
        <ModalBody>
          <p>
            <svg width="35" height="34" viewBox="0 0 35 34"><path d="M17.500 2.500L33 31.500H2z" fill="#1c6bcb" stroke="#1c6bcb" strokeWidth="4" strokeLinejoin="round" /><path d="M15 10h5.500v11H15zM15 24h5.500v4H15z" fill="#fff" /></svg>{' '}
            Виникла помилка при взаємодії з криптографічною бібліотекою. Бібліотеку web-підпису не запущено або не інстальовано у системі. Для продовження необхідно запустити або інсталювати бібліотеку web-підпису.
          </p>
          <a href="#">Інсталяційний пакет web-бібліотеки підпису</a>
          <a href="#">Інсталяційний пакет бібліотеки підпису (web-розширення)</a>
          <a href="#">Настанова користувача</a>
        </ModalBody>
        <ModalFooter><OkButton>Так</OkButton></ModalFooter>
      </Modal>
    </Page>
    <PageScroll><Chevron dir="up" c="#bcbcbc" s={9} /><Chevron dir="down" c="#bcbcbc" s={9} /></PageScroll>
    <ToTop aria-label="Вгору"><Chevron dir="up" c="#fff" s={11} w={2.500} /></ToTop>
  </Viewport>
);

const files = [
  { name: 'Z-К-ФОП', icon: <Folder /> },
  {
    name: 'EUSignWebInstall',
    icon: (
      <svg width="16" height="16" viewBox="0 0 16 16"><rect width="16" height="16" fill="#1b2f57" /><rect x="2" y="3" width="11" height="7" fill="#e9eef8" /><path d="M4 5h4M4 7.500h4M9 5h3v3H9zM5 13h7" stroke="#1b2f57" fill="none" /><path d="M1 12.500h14M5 14.500h6" stroke="#e9eef8" /></svg>
    ),
  },
  { name: 'key_1134849156_1134849156.jks', icon: <Sheet />, sel: true },
  { name: 'password', icon: <Sheet lines /> },
];

const FileManager = () => (
  <Explorer>
    <ExTitle>
      <ExTitleText>6-ЕЦП</ExTitleText>
      <WindowControls>
        <WindowButton aria-label="Свернуть"><Stroke d="M0 5.500h10" s={10} vb={10} w={1} /></WindowButton>
        <WindowButton aria-label="Развернуть"><Stroke d="M.5.5h9v9h-9z" s={10} vb={10} w={1} /></WindowButton>
        <WindowButton aria-label="Закрыть"><Stroke d="M.5.5l9 9M9.500.5l-9 9" s={10} vb={10} w={1} /></WindowButton>
      </WindowControls>
    </ExTitle>
    <ExMenu>
      <ExMenuTab $w={68} $open aria-label="Главная" />
      <ExMenuTab $w={92}>Поделиться</ExMenuTab>
      <ExMenuTab $w={48}>Вид</ExMenuTab>
      <HelpRow>
        <Chevron dir="up" c="#8a8a8a" w={1.3} />
        <svg width="15" height="15" viewBox="0 0 15 15"><circle cx="7.500" cy="7.500" r="7" fill="#0f73d1" /><path d="M5.500 5.800c0-2.800 4.200-2.600 4.200-.2 0 1.500-2.100 1.600-2.100 3.300M7.600 10.500v1.500" stroke="#fff" strokeWidth="1.500" fill="none" /></svg>
      </HelpRow>
    </ExMenu>
    <Ribbon>
      <RibbonButton $w={60}><RibbonIcon />Удалить</RibbonButton>
      <RibbonButton $w={48}><RibbonIcon><Folder s={17} /></RibbonIcon>Создать<DropMark /></RibbonButton>
      <RibbonButton $w={51}>
        <RibbonIcon>
          <svg width="16" height="18" viewBox="0 0 16 18"><path d="M1.500.5h7l3 3v12h-10z" fill="#fafafa" stroke="#a5a5a5" /><path d="M8.500.5v3h3" fill="none" stroke="#a5a5a5" /><path d="M11 8.500l3.500 4h-2V17h-3v-4.500h-2z" fill="#1fb32b" /></svg>
        </RibbonIcon>
        Открыть<DropMark />
      </RibbonButton>
      <RibbonButton $w={55}>
        <RibbonIcon>
          <svg width="16" height="16" viewBox="0 0 16 16" fill="#c9e4fa" stroke="#2f8fe0"><path d="M.5.5h7v7h-7zM8.500.5h7v7h-7zM.5 8.500h7v7h-7zM8.500 8.500h7v7h-7z" /></svg>
        </RibbonIcon>
        Выделить<DropMark />
      </RibbonButton>
    </Ribbon>
    <AddressRow>
      <AddressBox>
        <Crumb $w={20}><Folder s={15} /></Crumb>
        <Crumb $w={17}><Stroke d="M5 3L2 6l3 3M9 3L6 6l3 3" s={12} vb={12} w={1.2} /></Crumb>
        <Crumb $w={29}>HL7</Crumb>
        <Crumb $w={15}><Chevron dir="right" s={8} c="#666" w={1.500} /></Crumb>
        <Crumb $w={43}>6-ЕЦП</Crumb>
        <Chevron dir="right" s={8} c="#666" w={1.500} />
        <AddressTail>
          <Chevron dir="down" s={10} c="#666" />
          <Refresh aria-label="Обновить">
            <svg width="12" height="12" viewBox="0 0 12 12" fill="none" stroke="#666" strokeWidth="1.500"><path d="M3 2.500A4.700 4.700 0 1 0 9.500 3" /><path d="M9.800 0v3.500H6" /></svg>
          </Refresh>
        </AddressTail>
      </AddressBox>
      <ExSearch placeholder="Поиск: 6-..." aria-label="Поиск в папке" />
    </AddressRow>
    <ExMain>
      <SideTree>
        <div>
          <TreeItem><Pin /></TreeItem>
          <TreeItem><Pin /></TreeItem>
          <TreeItem>Ю</TreeItem>
          <TreeItem />
          <TreeItem>а к</TreeItem>
        </div>
        <div>
          <TreeItem>оте</TreeItem>
          <TreeItem />
          <TreeItem />
          <TreeItem />
          <TreeItem>ния</TreeItem>
          <TreeItem />
          <TreeItem>об</TreeItem>
          <TreeItem>гол</TreeItem>
          <TreeItem>OS</TreeItem>
          <TreeItem $sel>(C:)</TreeItem>
        </div>
      </SideTree>
      <VScroll><Chevron dir="up" s={9} /><VThumb /><Chevron dir="down" s={9} /></VScroll>
      <FilePane>
        <FileTable>
          <thead><tr><th>Имя<SortMark><Chevron dir="up" s={9} c="#777" w={1.2} /></SortMark></th></tr></thead>
          <tbody>
            {files.map((f) => (
              <tr key={f.name}><td><FileCell $sel={f.sel}>{f.icon}{f.name}</FileCell></td></tr>
            ))}
          </tbody>
        </FileTable>
        <HScroll><Chevron dir="left" s={9} /><HThumb /><Chevron dir="right" s={9} /></HScroll>
      </FilePane>
    </ExMain>
    <ExStatus>
      <StatusText>Выбран 1 элемент: 6,60 КБ</StatusText>
      <ViewSwitch>
        <ViewButton $on aria-label="Таблица">
          <svg width="16" height="14" viewBox="0 0 16 14" fill="none" stroke="#777"><path d="M.5.5h4v13h-4zM.5 5h4M.5 9h4M6 2.500h4M11.500 2.500h4M6 7h4M11.500 7h4M6 11.500h4M11.500 11.500h4" /></svg>
        </ViewButton>
        <ViewButton aria-label="Значки">
          <svg width="14" height="11" viewBox="0 0 14 11"><rect x=".5" y=".5" width="13" height="10" fill="#fff" stroke="#8a8a8a" /><rect x="2" y="2" width="10" height="4" fill="#74aef0" /><path d="M2 5l10 2v2H2z" fill="#2d5f5c" /></svg>
        </ViewButton>
      </ViewSwitch>
    </ExStatus>
  </Explorer>
);

const TaskPanel = () => (
  <Taskbar>
    <SystemButton aria-label="Пуск">
      <svg width="16" height="16" viewBox="0 0 16 16" fill="#fff"><path d="M0 2.300L6.500 1.400v6.200H0zM7.300 1.300L16 0v7.600H7.300zM0 8.400h6.500v6.200L0 13.700zM7.300 8.400H16V16l-8.700-1.300z" /></svg>
    </SystemButton>
    <SystemButton aria-label="Поиск"><Stroke d="M15.500 5.500a5 5 0 1 1-10 0 5 5 0 0 1 10 0M7 9L.5 15.500" w={1.3} /></SystemButton>
    <SystemButton aria-label="Представление задач">
      <svg width="16" height="16" viewBox="0 0 16 16" fill="none" stroke="#fff" strokeWidth="1.200"><path d="M.6 0v2.500h10V0M.6 16v-2.500h10V16M.6 5h10v6H.6zM14.500 0v3M14.500 8v8" /><path d="M13 4h3v3h-3z" fill="#fff" stroke="none" /></svg>
    </SystemButton>
    <Apps>
      <AppButton $state="open" aria-label="Проводник">
        <svg width="22" height="18" viewBox="0 0 22 18"><path d="M0 0h9l2 2h11v16H0z" fill="#ffd257" /><path d="M0 0h9l1 3H0z" fill="#e89a12" /><path d="M4 18v-7h14v7h-4v-3H8v3z" fill="#3a94dc" /></svg>
      </AppButton>
      <AppButton aria-label="Плеер">
        <svg width="24" height="24" viewBox="0 0 24 24"><circle cx="12" cy="12" r="12" fill="#ffd400" /><path d="M24 11a12 12 0 0 1-9 12V13z" fill="#f0622c" /><path d="M10 4h5l-.5 5.500L18 12l-1 10.800a12 12 0 0 1-13-2.300L5.500 12l4-2.500z" fill="#353a42" /></svg>
      </AppButton>
      <AppButton aria-label="Сохранение">
        <svg width="24" height="24" viewBox="0 0 24 24"><path d="M0 0h22l2 2v22H0z" fill="#1d3fbf" /><path d="M7 0h10v8H7z" fill="#b5c4ea" /><path d="M13 1.500h3v5h-3z" fill="#1d3fbf" /><path d="M3 11h17v12H3z" fill="#fbeeee" /><path d="M4 14h15M4 17h15M4 20h8" stroke="#e58d8d" /><path d="M13 18h6v4h-6z" fill="#777" /></svg>
      </AppButton>
      <AppButton aria-label="Chrome">
        <svg width="22" height="22" viewBox="0 0 22 22"><circle cx="11" cy="11" r="11" fill="#fcc934" /><path d="M1.500 5.500A11 11 0 0 1 20.500 5.500H11L6.200 13.700z" fill="#e04a3f" /><path d="M1.500 5.500A11 11 0 0 0 11 22l4.800-8.200H6.200z" fill="#2b9e51" /><circle cx="11" cy="11" r="5.200" fill="#fff" /><circle cx="11" cy="11" r="4.200" fill="#4c8bf5" /></svg>
      </AppButton>
      <AppButton aria-label="Сканер">
        <svg width="24" height="24" viewBox="0 0 24 24"><rect width="24" height="24" fill="#2672ec" /><path d="M6 5l13 8.500" stroke="#fff" strokeWidth="1.800" /><path d="M4 13.500h14l2-.5v5.500H4z" fill="#fff" /><path d="M6 14.500h10" stroke="#2672ec" /></svg>
      </AppButton>
      <AppButton $state="open" aria-label="Skype">
        <svg width="24" height="24" viewBox="0 0 24 24"><circle cx="7" cy="7" r="7" fill="#0a8fd8" /><circle cx="17" cy="17" r="5" fill="#0a8fd8" /><circle cx="12" cy="12" r="10" fill="#18aee6" /><path d="M15.500 8.500C14 6 8.500 6.300 8.500 9.300s7 2.200 7 5.200-6 3.200-7.500.5" fill="none" stroke="#fff" strokeWidth="2.500" /></svg>
        <CountBadge>1</CountBadge>
      </AppButton>
      <AppButton $state="open" aria-label="Калькулятор">
        <svg width="18" height="24" viewBox="0 0 18 24"><rect width="18" height="24" fill="#7d858c" /><path d="M2 2h14v4H2z" fill="#4dd2f2" /><path d="M2 8h4v4H2zM7 8h4v4H7zM12 8h4v4h-4zM2 13h4v4H2zM7 13h4v4H7zM2 18h4v4H2zM7 18h4v4H7z" fill="#e8edf0" /><path d="M12 13h4v9h-4z" fill="#174a94" /></svg>
      </AppButton>
      <AppButton $state="active" aria-label="Firefox">
        <svg width="24" height="24" viewBox="0 0 24 24"><path d="M3 4c0 2 0 2 1 3l3-3c0 2 1 3 3 3l4-1c-1-2 0-5 2-6 0 3 5 4 6.500 9 1.500 8-3 14.500-10.500 14.500S-.5 17 1 10.500z" fill="#ff9a1f" /><path d="M1 12c0 7 5 12 11 12s11-5 11-11c-2 4-6 6-10 5S4 14 1 12z" fill="#f5334f" /><path d="M18 3c4 4 4 12-1 15 2-5 1-9-3-11z" fill="#ffdf3c" /><circle cx="12" cy="12.500" r="5" fill="#7442d9" /><path d="M6 9c3-1 4 1 7 1-1 2-4 1-4 3-2 0-3-2-3-4z" fill="#ff7a24" /></svg>
      </AppButton>
      <AppButton aria-label="Viber">
        <svg width="24" height="24" viewBox="0 0 24 24"><path d="M6 1.500h12c3 0 4.500 2 4.500 5v7c0 3-2 5-5 5h-5L8.500 22.500V18.500H6c-3 0-4.500-2-4.500-5v-7c0-3 2-5 4.500-5z" fill="#7a5de8" stroke="#fff" strokeWidth="2" /><path d="M7.500 5.500C6 6.500 6 8 8 11s4 4.500 6 5 3.500-2 2.500-3l-2-1-1.500 1c-1.500-.5-2.500-2-3-3l1-1.500z" fill="#fff" /><path d="M12.500 4.500c3 0 5 2 5 5M12.500 7c1.500 0 2.500 1 2.500 2.500" fill="none" stroke="#fff" /></svg>
      </AppButton>
      <AppButton aria-label="Opera">
        <svg width="23" height="23" viewBox="0 0 23 23"><circle cx="11.500" cy="11.500" r="11.300" fill="#e0142b" /><ellipse cx="11.500" cy="11.500" rx="5" ry="8.500" fill="#22343f" /></svg>
      </AppButton>
      <AppButton $state="open" aria-label="Word">
        <svg width="22" height="22" viewBox="0 0 22 22"><path d="M12 2h10v18H12z" fill="#fff" /><path d="M14 5h7M14 8h7M14 11h7M14 14h7M14 17h7" stroke="#2b579a" /><path d="M0 2l13-2v22L0 20z" fill="#2b579a" /><path d="M2.500 7.500l2 7 2-6 2 6 2-7" fill="none" stroke="#fff" strokeWidth="1.500" /></svg>
      </AppButton>
      <AppButton aria-label="Edge">
        <svg width="24" height="24" viewBox="0 0 24 24"><circle cx="12" cy="12" r="12" fill="#1277cf" /><path d="M0 11C1 4 6 0 12 0c7 0 12 5 12 10.500 0 4-3 6-6.500 6s-4-1.500-3-2.500c1.500-2 0-6-5-6C5 8 1 9 0 11z" fill="#2fb9d8" /><path d="M15 .4c5 1 9 5 9 10 0 4-3 6-6.500 6s-4-1.500-3-2.500 2-7 .5-13.500z" fill="#5bd86b" /><path d="M9 9.500c-4 5-1 11 6 11 3 0 5-1 7-2.500-5 1.500-10-.5-10-5 0-1 .5-2 1-2.500z" fill="#0b4a94" /><path d="M22.800 17.500c-5 2-9-.5-8.800-3l3.500 2c2.500 0 4-.8 5.300-1.800z" fill="#22343f" /></svg>
      </AppButton>
    </Apps>
    <Tray>
      <TrayItem $w={24} aria-label="Скрытые значки"><Chevron dir="up" c="#fff" s={13} w={1} /></TrayItem>
      <TrayItem $w={24} aria-label="Питание">
        <svg width="17" height="12" viewBox="0 0 17 12" fill="none" stroke="#fff"><path d="M5 3.500h10.500v7H4.500V8M15.500 5.500h1v3h-1" /><path d="M7 5.500h7v3H7z" fill="#fff" /><path d="M.5 2.500h4v2l-1 1.500h-2l-1-1.500zM1.500 0v2M3.500 0v2M2.500 6v5.500h2" /></svg>
      </TrayItem>
      <TrayItem $w={36}>ENG</TrayItem>
      <TrayItem $w={66}>11:37<br />24.10.2020</TrayItem>
      <NoteButton $w={48} aria-label="Уведомления">
        <svg width="16" height="16" viewBox="0 0 16 16" fill="#fff"><path d="M0 0h16v12H8l-3 3v-3H0z" /><path d="M3 3.500h10M3 6h10M3 8.500h10" stroke="#1b2941" /></svg>
        <NoteBadge>24</NoteBadge>
      </NoteButton>
      <PeekBar />
    </Tray>
  </Taskbar>
);

export default function App() {
  return (
    <Desktop>
      <Global />
      <Workspace>
        <WordWindow>
          <WordTitle />
          <WordRibbon>В</WordRibbon>
          <WordScroll><WordThumb /></WordScroll>
        </WordWindow>
        <FileManager />
        <Browser>
          <BrowserTabs />
          <Navigation />
          <BookmarkBar />
          <WebPage />
          <InstallPopup />
        </Browser>
      </Workspace>
      <TaskPanel />
    </Desktop>
  );
}
